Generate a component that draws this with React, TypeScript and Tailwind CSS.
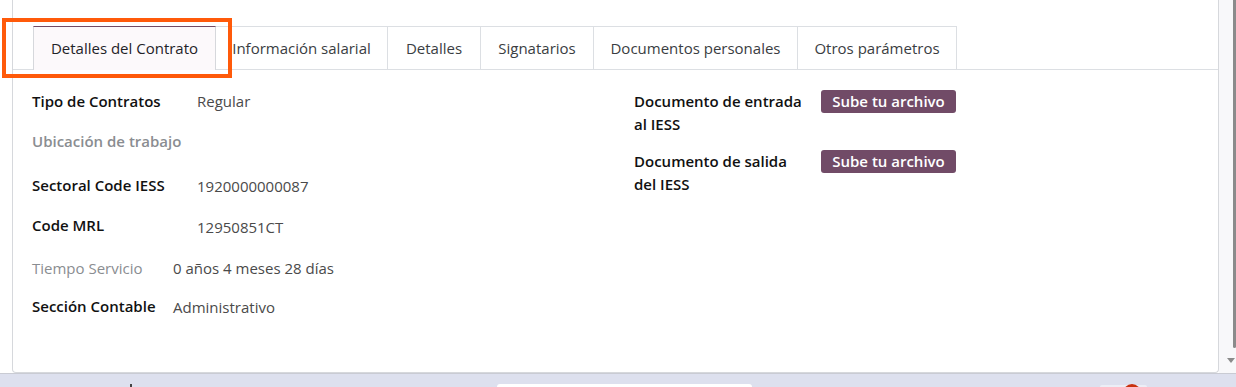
const tabs = [
  { label: "Detalles del Contrato", w: "w-[183px]" },
  { label: "Información salarial", w: "w-[172px]" },
  { label: "Detalles", w: "w-[93px]" },
  { label: "Signatarios", w: "w-[113px]" },
  { label: "Documentos personales", w: "w-[204px]" },
  { label: "Otros parámetros", w: "w-[159px]" },
]

function FieldRow({
  label,
  value,
  labelW,
  muted = false,
  bold = true,
  className = "",
  valueClass = "",
}: {
  label: string
  value?: string
  labelW: string
  muted?: boolean
  bold?: boolean
  className?: string
  valueClass?: string
}) {
  return (
    <div className={`flex items-start leading-6 ${className}`}>
      <div
        className={`${labelW} shrink-0 ${bold ? "font-semibold" : "font-normal"} ${
          muted ? "text-[#8a8d91]" : "text-[#111111]"
        }`}
      >
        {label}
      </div>
      {value && <div className={`text-[#4a4a4a] ${valueClass}`}>{value}</div>}
    </div>
  )
}

function UploadRow({ lines, className = "" }: { lines: string[]; className?: string }) {
  return (
    <div className={`flex items-start ${className}`}>
      <div className="w-[187px] shrink-0 font-semibold text-[#111111] leading-[23px]">
        {lines.map((l) => (
          <div key={l}>{l}</div>
        ))}
      </div>
      <button className="h-[23px] w-[135px] flex items-center justify-center rounded-[3px] bg-[#714b67] text-white font-semibold">
        Sube tu archivo
      </button>
    </div>
  )
}

export default function App() {
  return (
    <div
      className="relative w-[1236px] h-[387px] flex flex-col bg-[#dde0ee] overflow-hidden text-[15px]"
      style={{ fontFamily: "'Open Sans', 'Noto Sans', sans-serif" }}
    >
      <div className="flex h-[373px] bg-white">
        <div className="w-3 shrink-0" />
        {/* card */}
        <div className="flex-1 flex flex-col border-l border-r border-b border-[#d6d8dc] rounded-b-[4px] pt-[26px]">
          {/* tabs */}
          <div className="flex border-b border-[#dcdfe3] pl-5">
            {tabs.map((t, i) =>
              i === 0 ? (
                <div
                  key={t.label}
                  className={`${t.w} h-[44px] -mb-px flex items-center justify-center whitespace-nowrap bg-[#fcf9fb] border-t border-t-[#714b67] border-x border-x-[#d6d8dc] text-[#1f2328]`}
                >
                  {t.label}
                </div>
              ) : (
                <div
                  key={t.label}
                  className={`${t.w} h-[43px] flex items-center justify-center whitespace-nowrap border-t border-r border-[#dcdfe3] text-[#3a3d42]`}
                >
                  {t.label}
                </div>
              )
            )}
          </div>

          {/* form */}
          <div className="flex pl-[19px] pt-[19px]">
            <div className="w-[602px] shrink-0 flex flex-col">
              <FieldRow label="Tipo de Contratos" value="Regular" labelW="w-[165px]" />
              <FieldRow label="Ubicación de trabajo" labelW="w-[165px]" muted className="mt-4" />
              <FieldRow
                label="Sectoral Code IESS"
                value="1920000000087"
                labelW="w-[165px]"
                className="mt-5"
                valueClass="pt-[1px]"
              />
              <FieldRow
                label="Code MRL"
                value="12950851CT"
                labelW="w-[165px]"
                className="mt-[15px]"
                valueClass="pt-[2px]"
              />
              <FieldRow
                label="Tiempo Servicio"
                value="0 años 4 meses 28 días"
                labelW="w-[141px]"
                muted
                bold={false}
                className="mt-[17px]"
              />
              <FieldRow
                label="Sección Contable"
                value="Administrativo"
                labelW="w-[141px]"
                className="mt-[14px]"
                valueClass="pt-[1px]"
              />
            </div>
            <div className="flex flex-col">
              <UploadRow lines={["Documento de entrada", "al IESS"]} className="pt-[1px]" />
              <UploadRow lines={["Documento de salida", "del IESS"]} className="mt-[14px]" />
            </div>
          </div>
        </div>
        {/* scrollbar */}
        <div className="w-[17px] shrink-0 bg-[#f8f8fa] flex flex-col items-end">
          <div className="w-[3px] h-[348px] bg-[#8b8b8b] rounded-b-full" />
          <div className="mt-[10px] mr-[1px] w-0 h-0 border-l-[4px] border-r-[4px] border-t-[5px] border-l-transparent border-r-transparent border-t-[#8b8b8b]" />
        </div>
      </div>

      {/* taskbar strip */}
      <div className="flex-1 flex items-end border-t border-[#c9cbd3]">
        <div className="ml-[130px] w-[2px] h-[3px] bg-[#444]" />
        <div className="ml-[365px] w-[255px] h-[3px] bg-white rounded-t-[8px]" />
        <div className="ml-[348px] w-[47px] h-[2px] bg-[#eceef6] rounded-t-[4px] flex justify-center">
          <div className="w-[18px] h-[18px] -mt-[1px] ml-[16px] rounded-full bg-[#c8320f]" />
        </div>
      </div>

      {/* orange highlight annotation */}
      <div className="absolute left-[2px] top-[18px] w-[230px] h-[60px] border-4 border-[#ff5a0a] pointer-events-none" />
    </div>
  )
}
